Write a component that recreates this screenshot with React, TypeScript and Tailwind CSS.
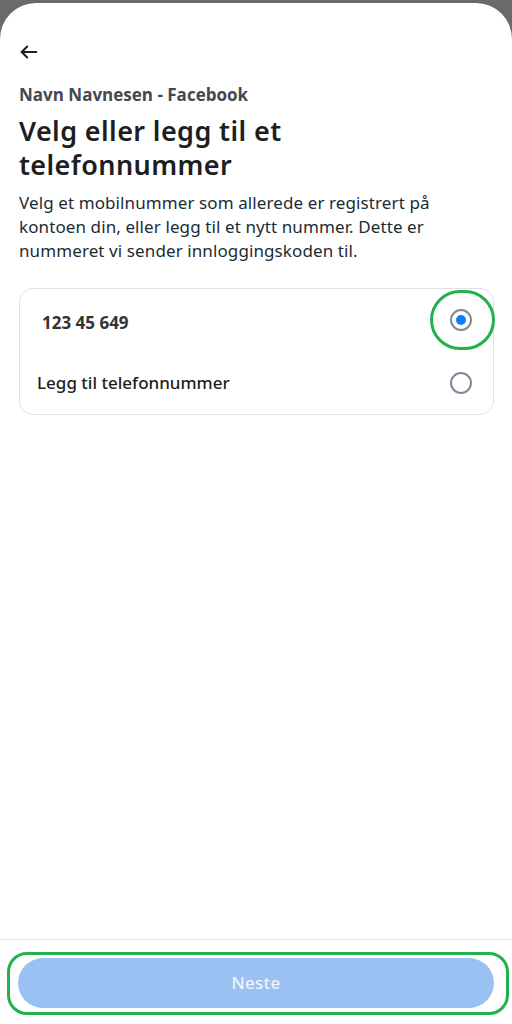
import React from "react";

export default function App() {
  return (
    <div className="w-[512px] h-[1024px] bg-[#6a6a6a] pt-[3px] overflow-hidden" style={{ fontFamily: "'Noto Sans', sans-serif" }}>
      <div className="relative h-[1021px] bg-white rounded-t-[36px] flex flex-col">
        <div className="flex-1 px-[19px]">
          <div className="pt-[38px] h-[80px]">
            <svg width="22" height="22" viewBox="0 0 24 24" fill="none" stroke="#1c1e21" strokeWidth="2.2" strokeLinecap="round" strokeLinejoin="round" className="ml-[-1px]">
              <path d="M20 12H4" />
              <path d="M10 6l-6 6 6 6" />
            </svg>
          </div>
          <div className="text-[17px] font-bold text-[#444950] leading-[24px]" style={{ fontFamily: "'Open Sans', sans-serif" }}>
            Navn Navnesen - Facebook
          </div>
          <h1 className="text-[27px] font-semibold text-[#1c1e21] leading-[34px] mt-[7px] tracking-[0.4px]">
            Velg eller legg til et
            <br />
            telefonnummer
          </h1>
          <p className="text-[17px] text-[#1c2b33] leading-[24px] mt-[9px] tracking-[0.1px]">
            Velg et mobilnummer som allerede er registrert på kontoen din, eller legg til et nytt nummer. Dette er nummeret vi sender innloggingskoden til.
          </p>
          <div className="mt-[25px] w-[475px] h-[127px] border border-[#dfe2e6] rounded-[14px] flex flex-col">
            <div className="h-[63px] flex items-center justify-between pl-[22px] pr-[21px]">
              <span className="text-[17px] font-bold text-[#333] pt-[5px]" style={{ fontFamily: "'Open Sans', sans-serif" }}>123 45 649</span>
              <div className="w-[22px] h-[22px] rounded-full border-2 border-[#7d8b99] flex items-center justify-center">
                <div className="w-[10px] h-[10px] rounded-full bg-[#0a7cff]" />
              </div>
            </div>
            <div className="h-[63px] flex items-center justify-between pl-[17px] pr-[21px]">
              <span className="text-[17px] font-medium text-[#1c1e21]">Legg til telefonnummer</span>
              <div className="w-[22px] h-[22px] rounded-full border-2 border-[#7d8b99]" />
            </div>
          </div>
        </div>
        <div className="border-t border-[#e6e6e6] h-[85px] px-[18px] pt-[18px]">
          <button className="w-[476px] h-[50px] rounded-full bg-[#9bc1f3] text-[#eef4fd] text-[17px] font-medium tracking-[0.3px]">
            Neste
          </button>
        </div>
        <div className="absolute left-[430px] top-[287px] w-[65px] h-[60px] rounded-full border-[3px] border-[#22b14c]" />
        <div className="absolute left-[7px] top-[949px] w-[502px] h-[63px] rounded-[20px] border-[3px] border-[#22b14c]" />
      </div>
    </div>
  );
}
